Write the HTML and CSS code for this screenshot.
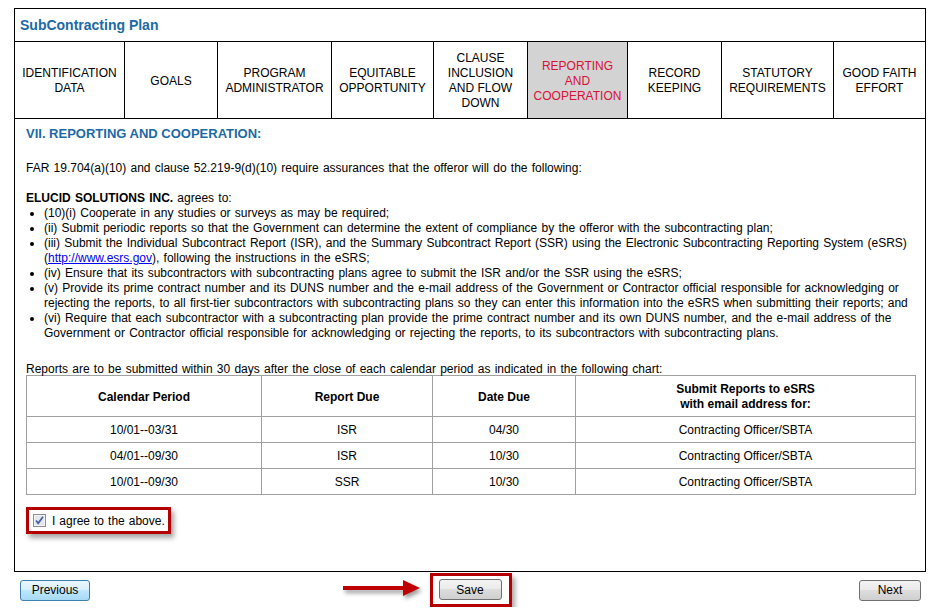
FILE: index.html
```html
<!DOCTYPE html>
<html>
<head>
<meta charset="utf-8">
<title>SubContracting Plan</title>
<link rel="stylesheet" href="styles.css">
</head>
<body>
<div class="panel">
  <div class="title">SubContracting Plan</div>
  <div class="tabs">
    <div class="tab">IDENTIFICATION<br>DATA</div>
    <div class="tab">GOALS</div>
    <div class="tab">PROGRAM<br>ADMINISTRATOR</div>
    <div class="tab">EQUITABLE<br>OPPORTUNITY</div>
    <div class="tab">CLAUSE<br>INCLUSION<br>AND FLOW<br>DOWN</div>
    <div class="tab active">REPORTING<br>AND<br>COOPERATION</div>
    <div class="tab">RECORD<br>KEEPING</div>
    <div class="tab">STATUTORY<br>REQUIREMENTS</div>
    <div class="tab">GOOD FAITH<br>EFFORT</div>
  </div>
  <div class="content">
    <h2 class="heading">VII. REPORTING AND COOPERATION:</h2>
    <p class="far">FAR 19.704(a)(10) and clause 52.219-9(d)(10) require assurances that the offeror will do the following:</p>
    <p class="agrees"><b>ELUCID SOLUTIONS INC.</b> agrees to:</p>
    <ul class="items">
      <li>(10)(i) Cooperate in any studies or surveys as may be required;</li>
      <li>(ii) Submit periodic reports so that the Government can determine the extent of compliance by the offeror with the subcontracting plan;</li>
      <li>(iii) Submit the Individual Subcontract Report (ISR), and the Summary Subcontract Report (SSR) using the Electronic Subcontracting Reporting System (eSRS)<br>(<a href="#" class="link">http://www.esrs.gov</a>), following the instructions in the eSRS;</li>
      <li>(iv) Ensure that its subcontractors with subcontracting plans agree to submit the ISR and/or the SSR using the eSRS;</li>
      <li>(v) Provide its prime contract number and its DUNS number and the e-mail address of the Government or Contractor official responsible for acknowledging or<br>rejecting the reports, to all first-tier subcontractors with subcontracting plans so they can enter this information into the eSRS when submitting their reports; and</li>
      <li>(vi) Require that each subcontractor with a subcontracting plan provide the prime contract number and its own DUNS number, and the e-mail address of the<br>Government or Contractor official responsible for acknowledging or rejecting the reports, to its subcontractors with subcontracting plans.</li>
    </ul>
    <p class="reports">Reports are to be submitted within 30 days after the close of each calendar period as indicated in the following chart:</p>
    <table class="chart">
      <colgroup>
        <col class="c1"><col class="c2"><col class="c3"><col class="c4">
      </colgroup>
      <thead>
        <tr class="head-row">
          <th>Calendar Period</th>
          <th>Report Due</th>
          <th>Date Due</th>
          <th>Submit Reports to eSRS<br>with email address for:</th>
        </tr>
      </thead>
      <tbody>
        <tr><td>10/01--03/31</td><td>ISR</td><td>04/30</td><td>Contracting Officer/SBTA</td></tr>
        <tr><td>04/01--09/30</td><td>ISR</td><td>10/30</td><td>Contracting Officer/SBTA</td></tr>
        <tr><td>10/01--09/30</td><td>SSR</td><td>10/30</td><td>Contracting Officer/SBTA</td></tr>
      </tbody>
    </table>
    <div class="agree-box">
      <span class="check">
        <svg width="13" height="13" viewBox="0 0 13 13">
          <rect x="0.5" y="0.5" width="12" height="12" fill="#d9dadc" stroke="#8e8f91"/>
          <rect x="1.5" y="1.5" width="10" height="10" fill="#e6e7e9" stroke="#f4f4f4"/>
          <path d="M3 6.5 L5.2 9.2 L10 2.8" fill="none" stroke="#4660a8" stroke-width="1.8"/>
        </svg>
      </span>
      <span class="agree-label">I agree to the above.</span>
    </div>
  </div>
</div>
<div class="nav">
  <div class="nav-left"><button class="btn btn-prev">Previous</button></div>
  <div class="save-wrap">
    <svg class="arrow" width="80" height="20" viewBox="0 0 80 20">
      <rect x="0" y="8" width="62" height="4" fill="#c00000"/>
      <polygon points="60,2 77,10 60,18" fill="#c00000"/>
    </svg>
    <button class="btn">Save</button>
  </div>
  <div class="nav-right"><button class="btn btn-next">Next</button></div>
</div>
</body>
</html>
```

FILE: styles.css
```css
body {
  margin: 0;
  background: #fff;
  font-family: "Liberation Sans", Arial, sans-serif;
  font-size: 12px;
  color: #000;
}

.panel {
  margin: 8px 0 0 14px;
  width: 912px;
  height: 564px;
  box-sizing: border-box;
  border: 1px solid #000;
}

.title {
  height: 32px;
  border-bottom: 1px solid #000;
  padding-left: 5px;
  display: flex;
  align-items: center;
  font-weight: bold;
  font-size: 14px;
  color: #1b6aa6;
}

.tabs {
  display: grid;
  grid-template-columns: 109px 93px 114px 102px 94px 100px 94px 112px 92px;
  height: 76px;
  border-bottom: 1px solid #000;
}

.tab {
  display: flex;
  align-items: center;
  justify-content: center;
  text-align: center;
  line-height: 15px;
  padding-top: 2px;
  border-left: 1px solid #000;
  box-sizing: border-box;
}

.tab:first-child {
  border-left: none;
}

.tab.active {
  background: #d3d3d3;
  color: #da1038;
}

.content {
  padding: 7px 10px 0 11px;
}

.heading {
  margin: 0;
  font-size: 13px;
  line-height: 15px;
  font-weight: bold;
  color: #1b6aa6;
}

.content p {
  margin: 0;
  line-height: 15px;
  word-spacing: 0.9px;
}

.far {
  margin-top: 20px !important;
}

.agrees {
  margin-top: 15px !important;
}

.items {
  margin: 0;
  padding-left: 18px;
  line-height: 15px;
  white-space: nowrap;
  word-spacing: 0.9px;
}

.link {
  color: #0000ee;
  text-decoration: underline;
}

.reports {
  margin-top: 21px !important;
}

.chart {
  width: 889px;
  margin-top: -2px;
  table-layout: fixed;
  border-collapse: collapse;
  border: 1px solid #a0a0a0;
}

.c1 { width: 235px; }
.c2 { width: 171px; }
.c3 { width: 143px; }
.c4 { width: 340px; }

.chart th,
.chart td {
  border: 1px solid #a0a0a0;
  text-align: center;
  padding: 2px 0 0;
  line-height: 15px;
}

.chart th {
  height: 38px;
  font-weight: bold;
}

.chart td {
  height: 23px;
}

.agree-box {
  margin-top: 12px;
  display: inline-flex;
  align-items: center;
  height: 27px;
  box-sizing: border-box;
  border: 3px solid #b50000;
  padding: 0 3px 0 4px;
  box-shadow: 3px 4px 5px rgba(0, 0, 0, 0.35);
}

.check {
  display: inline-flex;
  width: 13px;
  height: 13px;
}

.agree-label {
  margin-left: 6px;
  word-spacing: 0.67px;
}

.nav {
  margin: 1px 22px 0 20px;
  display: grid;
  grid-template-columns: 1fr auto 1fr;
  align-items: center;
}

.nav-right {
  display: flex;
  justify-content: flex-end;
}

.save-wrap {
  position: relative;
  border: 3px solid #b50000;
  padding: 3px 7px 4px 6px;
  box-shadow: 3px 4px 5px rgba(0, 0, 0, 0.35);
  display: flex;
}

.arrow {
  position: absolute;
  left: -90px;
  top: 2px;
  filter: drop-shadow(2px 3px 2px rgba(0, 0, 0, 0.4));
}

.btn {
  font-family: "Liberation Sans", Arial, sans-serif;
  font-size: 12px;
  color: #000;
  height: 21px;
  padding: 0;
  border: 1px solid #707070;
  border-radius: 3px;
  background: linear-gradient(#f3f3f3 0%, #ebebeb 45%, #dddddd 50%, #cfcfcf 100%);
  width: 63px;
}

.btn-prev {
  width: 70px;
  border-color: #3c7fb1;
  background: linear-gradient(#eaf6fd 0%, #d9f0fc 45%, #bee6fd 50%, #a7d9f5 100%);
}

.btn-next {
  width: 62px;
}
```
